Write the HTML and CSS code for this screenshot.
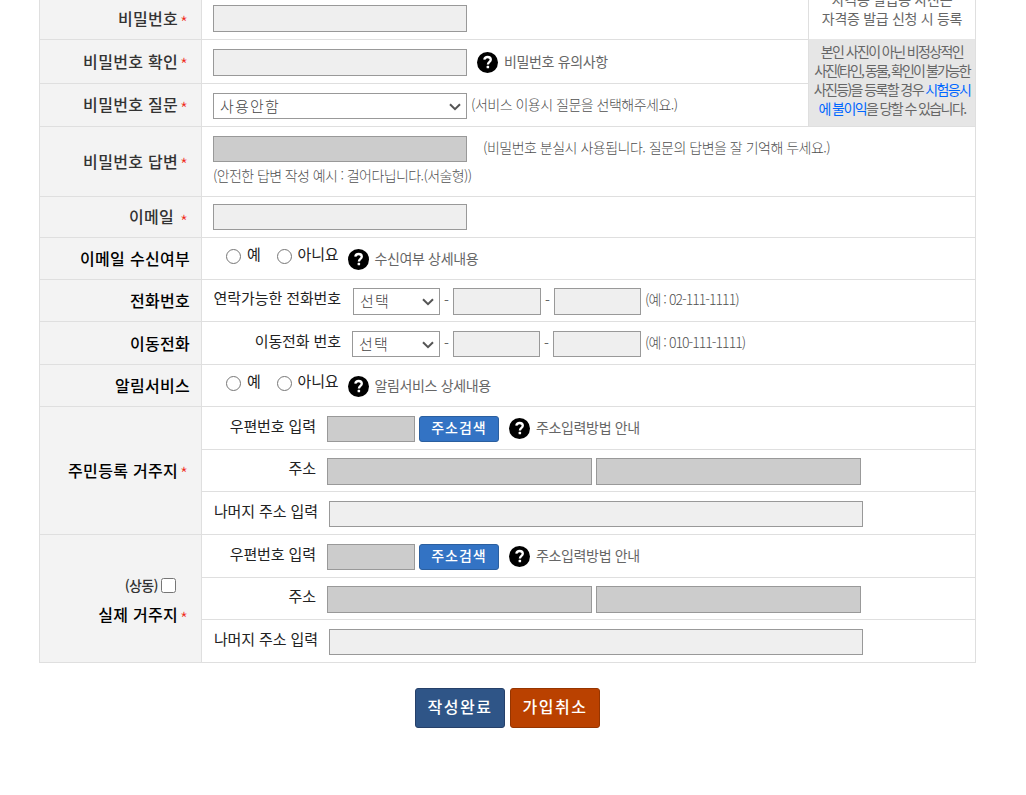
FILE: index.html
```
<!DOCTYPE html>
<html lang="ko">
    <head>
        <meta charset="UTF-8">
        <title>회원가입</title>
        <link rel="stylesheet" href="styles.css">
    </head>
    <body>
        <svg class="sprite" width="0" height="0">
            <symbol id="help" viewBox="0 0 21 21">
                <circle cx="10.5" cy="10.5" r="10.5" fill="#000"/>
                <path d="M7.3 7.6C7.6 5.8 8.8 5 10.6 5c2 0 3.2 1 3.2 2.7 0 2.2-2.9 2.2-2.9 4.8" fill="none" stroke="#fff" stroke-width="2.3"/>
                <rect x="9.6" y="13.8" width="2.5" height="2.5" rx="0.6" fill="#fff"/>
            </symbol>
        </svg>
        <div class="join-form">
            <div class="top">
                <div class="top-rows">
                    <div class="row row-pw">
                        <div class="label dark">비밀번호<em>*</em></div>
                        <div class="cell"><input class="field wide tall" type="password"></div>
                    </div>
                    <div class="row row-pw2">
                        <div class="label dark">비밀번호 확인<em>*</em></div>
                        <div class="cell">
                            <input class="field wide tall" type="password">
                            <svg class="help"><use href="#help"/></svg>
                            <span class="guide">비밀번호 유의사항</span>
                        </div>
                    </div>
                    <div class="row row-question">
                        <div class="label dark">비밀번호 질문<em>*</em></div>
                        <div class="cell">
                            <select class="field wide"><option>사용안함</option></select>
                            <span class="hint">(서비스 이용시 질문을 선택해주세요.)</span>
                        </div>
                    </div>
                </div>
                <div class="photo">
                    <p class="photo-info">자격증 발급용 사진은<br>자격증 발급 신청 시 등록</p>
                    <p class="photo-warn">본인 사진이 아닌 비정상적인<br><span class="tight">사진(타인, 동물, 확인이 불가능한</span><br>사진등)을 등록할 경우 <b>시험응시</b><br><b>에 불이익</b>을 당할 수 있습니다.</p>
                </div>
            </div>
            <div class="row row-answer">
                <div class="label dark">비밀번호 답변<em>*</em></div>
                <div class="cell">
                    <input class="field wide off" type="text" disabled>
                    <span class="hint hint-far">(비밀번호 분실시 사용됩니다. 질문의 답변을 잘 기억해 두세요.)</span>
                    <span class="hint hint-line">(안전한 답변 작성 예시 : 걸어다닙니다.(서술형))</span>
                </div>
            </div>
            <div class="row row-email">
                <div class="label dark spaced">이메일<em>*</em></div>
                <div class="cell"><input class="field wide" type="text"></div>
            </div>
            <div class="row row-radio">
                <div class="label">이메일 수신여부</div>
                <div class="cell">
                    <input class="radio" type="radio" name="mailing"><span class="choice first">예</span>
                    <input class="radio" type="radio" name="mailing"><span class="choice">아니요</span>
                    <svg class="help"><use href="#help"/></svg>
                    <span class="guide">수신여부 상세내용</span>
                </div>
            </div>
            <div class="row row-phone">
                <div class="label">전화번호</div>
                <div class="cell">
                    <span class="name name-phone">연락가능한 전화번호</span>
                    <select class="field num tall"><option>선택</option></select>
                    <span class="dash">-</span>
                    <input class="field num-wide tall" type="text">
                    <span class="dash">-</span>
                    <input class="field num tall" type="text">
                    <span class="hint hint-num">(예 : 02-111-1111)</span>
                </div>
            </div>
            <div class="row row-mobile">
                <div class="label">이동전화</div>
                <div class="cell">
                    <span class="name name-phone">이동전화 번호</span>
                    <select class="field num-wide"><option>선택</option></select>
                    <span class="dash">-</span>
                    <input class="field num" type="text">
                    <span class="dash">-</span>
                    <input class="field num-wide" type="text">
                    <span class="hint hint-num">(예 : 010-111-1111)</span>
                </div>
            </div>
            <div class="row row-radio">
                <div class="label">알림서비스</div>
                <div class="cell">
                    <input class="radio" type="radio" name="notice"><span class="choice first">예</span>
                    <input class="radio" type="radio" name="notice"><span class="choice">아니요</span>
                    <svg class="help"><use href="#help"/></svg>
                    <span class="guide">알림서비스 상세내용</span>
                </div>
            </div>
            <div class="row row-address">
                <div class="label">주민등록 거주지<em>*</em></div>
                <div class="lines">
                    <div class="cell zip">
                        <span class="name">우편번호 입력</span>
                        <input class="field num-wide off" type="text" disabled>
                        <button class="search" type="button">주소검색</button>
                        <svg class="help"><use href="#help"/></svg>
                        <span class="guide">주소입력방법 안내</span>
                    </div>
                    <div class="cell addr">
                        <span class="name">주소</span>
                        <input class="field half tall off" type="text" disabled>
                        <input class="field half tall off" type="text" disabled>
                    </div>
                    <div class="cell rest">
                        <span class="name">나머지 주소 입력</span>
                        <input class="field full" type="text">
                    </div>
                </div>
            </div>
            <div class="row row-address">
                <div class="label same">
                    <div class="same-check"><span>(상동)</span><input type="checkbox"></div>
                    <div class="same-name">실제 거주지<em>*</em></div>
                </div>
                <div class="lines">
                    <div class="cell zip">
                        <span class="name">우편번호 입력</span>
                        <input class="field num-wide off" type="text" disabled>
                        <button class="search" type="button">주소검색</button>
                        <svg class="help"><use href="#help"/></svg>
                        <span class="guide">주소입력방법 안내</span>
                    </div>
                    <div class="cell addr">
                        <span class="name">주소</span>
                        <input class="field half tall off" type="text" disabled>
                        <input class="field half tall off" type="text" disabled>
                    </div>
                    <div class="cell rest">
                        <span class="name">나머지 주소 입력</span>
                        <input class="field full" type="text">
                    </div>
                </div>
            </div>
        </div>
        <div class="buttons">
            <button class="btn" type="button">작성완료</button>
            <button class="btn cancel" type="button">가입취소</button>
        </div>
    </body>
</html>
```
FILE: styles.css
```
* {
    box-sizing: border-box;
    margin: 0;
    padding: 0;
}
body {
    background: #fff;
    font-family: "Noto Sans CJK KR", sans-serif;
    font-size: 14px;
    line-height: 20px;
    color: #666;
    overflow: hidden;
}
.sprite {
    display: block;
}
.join-form {
    width: 937px;
    margin-left: 39px;
    border: 1px solid #dfdfdf;
    border-top: 0;
    border-bottom: 0;
}
.top {
    display: flex;
}
.top-rows {
    flex: 1;
}
.row {
    display: flex;
    border-bottom: 1px solid #dfdfdf;
}
.row-pw { height: 40px; }
.row-pw2 { height: 44px; }
.row-question { height: 43px; }
.row-answer { height: 70px; }
.row-email { height: 41px; }
.row-radio { height: 42px; }
.row-phone { height: 42px; }
.row-mobile { height: 43px; }
.row-address { height: 128px; }

/* left column */
.label {
    display: flex;
    align-items: center;
    justify-content: flex-end;
    width: 162px;
    padding: 0 11px 2px 0;
    background: #f3f3f3;
    border-right: 1px solid #dfdfdf;
    font-size: 16px;
    font-weight: 500;
    letter-spacing: 0.3px;
    color: #000;
}
.label em {
    margin: 7px 2px 0 2px;
    font-size: 18px;
    font-style: normal;
    font-weight: 300;
    letter-spacing: 0;
    color: #f02814;
}
.dark {
    color: #333;
}
.spaced em {
    margin-left: 6px;
    margin-top: 10px;
}
.row-pw .label {
    padding-bottom: 3px;
}
.row-mobile .label {
    padding-bottom: 0;
}
.same {
    flex-direction: column;
    justify-content: flex-start;
    align-items: flex-end;
    padding-top: 41px;
}
.same-check,
.same-name {
    display: flex;
    height: 20px;
}
.same-name em {
    margin-top: 4px;
}
.same-check {
    align-items: center;
    margin: 0 14px 8px 0;
    font-size: 14px;
    letter-spacing: -0.6px;
    color: #333;
}
.same-check span {
    margin-top: -2px;
}
.same-check input {
    width: 15px;
    height: 15px;
    margin-left: 3px;
    margin-top: -1px;
}

/* right column */
.cell {
    display: flex;
    flex: 1;
    align-items: flex-start;
    padding-left: 11px;
    white-space: nowrap;
}
.lines {
    flex: 1;
}
.lines .cell {
    border-bottom: 1px solid #dfdfdf;
}
.lines .zip { height: 43px; padding-top: 9px; }
.lines .addr { height: 42px; padding-top: 8px; }
.lines .rest { height: 42px; padding-top: 9px; border-bottom: 0; }
.row-pw .cell { padding-top: 5px; }
.row-pw2 .cell { padding-top: 9px; }
.row-question .cell { padding-top: 9px; }
.row-answer .cell { padding-top: 9px; flex-wrap: wrap; align-content: flex-start; }
.row-email .cell { padding-top: 7px; }
.row-phone .cell { padding-top: 8px; }
.row-mobile .cell { padding-top: 9px; }
.row-radio .cell { padding: 11px 0 0 24px; }

.field {
    flex: none;
    height: 26px;
    background: #efefef;
    border: 1px solid #999;
    border-radius: 0;
}
.tall { height: 27px; }
.wide { width: 254px; }
.num { width: 87px; }
.num-wide { width: 88px; }
.half { width: 265px; }
.half + .half { margin-left: 4px; }
.full { width: 534px; }
.off { background: #ccc; }
select.field {
    appearance: none;
    padding: 0 0 2px 6px;
    background: #fff url("data:image/svg+xml,%3Csvg xmlns='http://www.w3.org/2000/svg' width='12' height='8'%3E%3Cpath d='M1 1.2l5 5 5-5' fill='none' stroke='%23555' stroke-width='2'/%3E%3C/svg%3E") no-repeat right 5px top 9px;
    font-family: "Noto Sans CJK KR", sans-serif;
    font-size: 15px;
    font-weight: 300;
    letter-spacing: 1.2px;
    color: #444;
}
.help {
    flex: none;
    width: 21px;
    height: 21px;
    margin: 3px 6px 0 10px;
}
.guide {
    margin-top: 2px;
    letter-spacing: -0.35px;
    font-weight: 400;
}
.hint {
    margin: 1px 0 0 4px;
    font-weight: 300;
    letter-spacing: -0.5px;
    color: #505050;
}
.hint-num {
    letter-spacing: -0.95px;
}
.hint-far {
    margin-left: 16px;
}
.hint-line {
    width: 100%;
    margin: 3px 0 0 0;
    letter-spacing: -0.6px;
}
.name {
    width: 103px;
    margin-right: 11px;
    font-size: 15px;
    letter-spacing: -0.1px;
    text-align: right;
    color: #222;
}
.rest .name {
    width: 105px;
}
.name-phone {
    width: 128px;
    margin-right: 11px;
}
.row-phone .name-phone {
    margin-right: 12px;
}
.dash {
    width: 13px;
    margin-top: 2px;
    text-align: center;
}
.radio {
    width: 15px;
    height: 15px;
    margin: 0 6px 0 0;
}
.choice {
    margin-top: -5px;
    font-size: 15px;
    letter-spacing: -0.2px;
    color: #222;
}
.first {
    margin-right: 16px;
}
.choice + .help {
    margin: 0 6px 0 10px;
}
.row-radio .guide {
    margin: -1px 0 0 -1px;
}
.search {
    width: 80px;
    height: 26px;
    margin-left: 4px;
    padding-bottom: 5px;
    background: #3373c4;
    border: 1px solid #2b5f9f;
    border-radius: 3px;
    font-family: "Noto Sans CJK KR", sans-serif;
    font-size: 14px;
    font-weight: 500;
    letter-spacing: 1px;
    line-height: 20px;
    color: #fff;
}
.zip .help {
    margin-top: 2px;
}
.zip .guide {
    margin-top: 1px;
}

/* photo notice */
.photo {
    width: 167px;
    border-left: 1px solid #dfdfdf;
    border-bottom: 1px solid #dfdfdf;
    text-align: center;
    white-space: nowrap;
}
.photo-info {
    height: 39px;
    margin-top: -10px;
    padding-bottom: 10px;
    line-height: 19px;
    letter-spacing: -0.3px;
    box-sizing: content-box;
}
.photo-warn {
    height: 87px;
    padding-top: 3px;
    background: #e6e6e6;
    line-height: 19px;
    letter-spacing: -1.6px;
}
.tight {
    letter-spacing: -1.9px;
}
.photo-warn b {
    font-weight: 400;
    color: #0066ff;
}

/* bottom buttons */
.buttons {
    display: flex;
    justify-content: center;
    gap: 5px;
    width: 937px;
    margin: 25px 0 0 39px;
}
.btn {
    width: 90px;
    height: 40px;
    padding-bottom: 5px;
    background: #2f5587;
    border: 1px solid #264069;
    border-radius: 3px;
    font-family: "Noto Sans CJK KR", sans-serif;
    font-size: 16px;
    font-weight: 500;
    letter-spacing: 1.5px;
    color: #fff;
}
.cancel {
    background: #ba4100;
    border-color: #963500;
}
```
